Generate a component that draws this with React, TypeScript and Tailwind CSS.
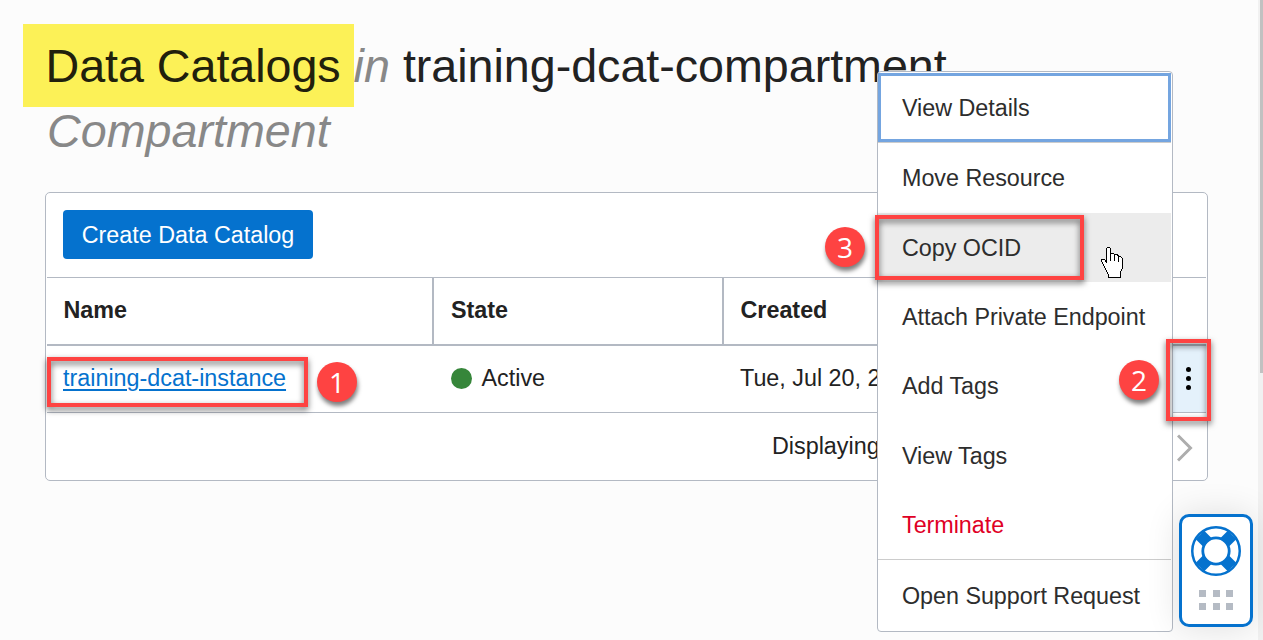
import React from "react";

const menuItems = [
  "Move Resource",
  "Copy OCID",
  "Attach Private Endpoint",
  "Add Tags",
  "View Tags",
];

function Badge({ n, className }: { n: number; className: string }) {
  return (
    <div
      className={`absolute flex size-10 items-center justify-center rounded-full bg-[#fe4342] font-['Open_Sans',sans-serif] text-[28px] leading-none text-white shadow-[1px_4px_4px_rgba(0,0,0,0.5)] ${className}`}
    >
      {n}
    </div>
  );
}

function Frame({ className }: { className: string }) {
  return (
    <div
      className={`pointer-events-none absolute border-4 border-[#fe4342] drop-shadow-[0_3px_3px_rgba(0,0,0,0.6)] ${className}`}
    />
  );
}

function HandCursor() {
  return (
    <svg
      className="absolute left-[1101px] top-[246px]"
      width="24"
      height="34"
      viewBox="0 0 24 34"
      shapeRendering="crispEdges"
    >
      <path
        d="M5.5 2.5 L6.5 1.5 H8.5 L9.5 2.5 V7.5 H12.5 L13.5 8.5 H16.5 L17.5 10.5 H19.5 L21.5 12.5 V21.5 L19.5 26.5 V31.5 H7.5 V28.5 L4.5 23.5 L2.5 18.5 L0.5 15.5 V13.5 H3.5 L5.5 16.5 Z"
        fill="#fff"
        stroke="#000"
      />
      <path d="M9.5 7 V15 M13.5 8 V15 M17.5 10 V16" stroke="#000" fill="none" />
    </svg>
  );
}

function SupportWidget() {
  return (
    <div className="absolute left-[1179px] top-[514px] flex h-[113px] w-[74px] flex-col items-center rounded-[10px] border-[3px] border-[#0572ce] bg-white pt-[9px] shadow-[0_0_34px_rgba(0,0,0,0.12)]">
      <svg width="50" height="50" viewBox="0 0 50 50">
        <circle cx="25" cy="25" r="23.75" fill="#fff" stroke="#0572ce" strokeWidth="2.5" />
        <path d="M9 9 L41 41 M41 9 L9 41" stroke="#0572ce" strokeWidth="12" />
        <circle cx="25" cy="25" r="13.2" fill="#fff" stroke="#0572ce" strokeWidth="2.8" />
      </svg>
      <div className="mt-[14px] grid grid-cols-3 gap-x-[6.5px] gap-y-[6px]">
        {[0, 1, 2, 3, 4, 5].map((i) => (
          <span key={i} className="size-[7px] bg-[#b5bbc4]" />
        ))}
      </div>
    </div>
  );
}

export default function App() {
  return (
    <div
      className="relative h-[640px] w-[1263px] overflow-hidden bg-[#fcfcfc] text-[23.33px] leading-[30px] text-[#222]"
      style={{ fontFamily: '"Liberation Sans", Arial, sans-serif' }}
    >
      <div className="absolute left-[23px] top-[24px] h-[83px] w-[331px] bg-[#fcf157]" />
      <h1 className="relative ml-[45.5px] w-[1100px] pt-[34px] text-[46.67px] leading-[65px]">
        <span className="tracking-[-0.04px] text-[#21200c]">Data Catalogs</span> <i className="text-[#888]">in</i>{" "}
        <span className="tracking-[-0.03px]">training-dcat-compartment</span>
        <br />
        <i className="ml-[1.5px] text-[#888]">Compartment</i>
      </h1>

      <section className="ml-[45px] mt-[28px] flex h-[289px] w-[1163px] flex-col rounded-[5px] border border-[#b3b9c3] bg-white">
        <div className="h-[84px] pl-[17px] pt-[17px]">
          <button className="h-[49px] w-[250px] rounded-[4px] bg-[#0572ce] text-white">Create Data Catalog</button>
        </div>
        <div className="mx-px flex h-[69px] border-b-2 border-t border-[#b3b9c3] font-bold leading-[65px]">
          <div className="w-[387px] border-r-2 border-[#b3b9c3] pl-[16.5px]">Name</div>
          <div className="w-[290px] border-r-2 border-[#b3b9c3] pl-[17px]">State</div>
          <div className="pl-[16.5px]">Created</div>
        </div>
        <div className="mx-px flex h-[67px] border-b border-[#b3b9c3] leading-[64px]">
          <div className="w-[387px] pl-[16px]">
            <a className="text-[#0572ce] underline decoration-2 underline-offset-[3px]">training-dcat-instance</a>
          </div>
          <div className="flex w-[290px] pl-[17px]">
            <span className="mr-[9.5px] mt-[22px] size-[21px] rounded-full bg-[#36863a]" />
            <span>Active</span>
          </div>
          <div className="w-[448px] pl-[16px]">Tue, Jul 20, 2</div>
          <div className="flex flex-1 flex-col items-center gap-[4px] bg-[#e4f1fb] pr-px pt-[21px]">
            <span className="size-[5px] rounded-full bg-black" />
            <span className="size-[5px] rounded-full bg-black" />
            <span className="size-[5px] rounded-full bg-black" />
          </div>
        </div>
        <div className="flex flex-1 items-center pl-[726px]">
          <span className="w-[405px] pb-[2px]">Displaying</span>
          <svg className="mt-[2px]" width="18" height="30" viewBox="0 0 18 30" fill="none" stroke="#adadad" strokeWidth="3">
            <path d="M1 2.5 L13.5 15 L1 27.5" />
          </svg>
        </div>
      </section>

      <div className="absolute left-[1258px] top-0 h-[640px] w-[5px] bg-[#f1f1f1] pl-[2px]">
        <div className="h-[373px] bg-[#c1c1c1]" />
      </div>

      <nav className="absolute left-[877px] top-[71px] h-[561px] w-[296px] rounded-[4px] border border-[#b3b9c3] bg-white pr-px pt-px tracking-[-0.03px] text-[#2d2d2d]">
        <div className="mb-[1.25px] h-[69px] border-[3px] border-[#74a5e0] pl-[21px] leading-[64px] shadow-[0_1px_0_#ccc]">
          View Details
        </div>
        {menuItems.map((item) => (
          <div
            key={item}
            className={`h-[69.42px] pl-[24px] leading-[71px] ${item === "Copy OCID" ? "bg-[#ececec]" : ""}`}
          >
            {item}
          </div>
        ))}
        <div className="h-[69.42px] border-b border-[#ccc] pl-[24px] leading-[71px] text-[#e00025]">Terminate</div>
        <div className="pl-[24px] leading-[72px]">Open Support Request</div>
      </nav>

      <SupportWidget />
      <Frame className="left-[47px] top-[357px] h-[50px] w-[261px]" />
      <Frame className="left-[1166px] top-[339px] h-[82px] w-[45px]" />
      <Frame className="left-[875px] top-[215px] h-[65px] w-[209px]" />
      <Badge n={1} className="left-[317px] top-[362px]" />
      <Badge n={2} className="left-[1119px] top-[360px]" />
      <Badge n={3} className="left-[825px] top-[227px]" />
      <HandCursor />
    </div>
  );
}
